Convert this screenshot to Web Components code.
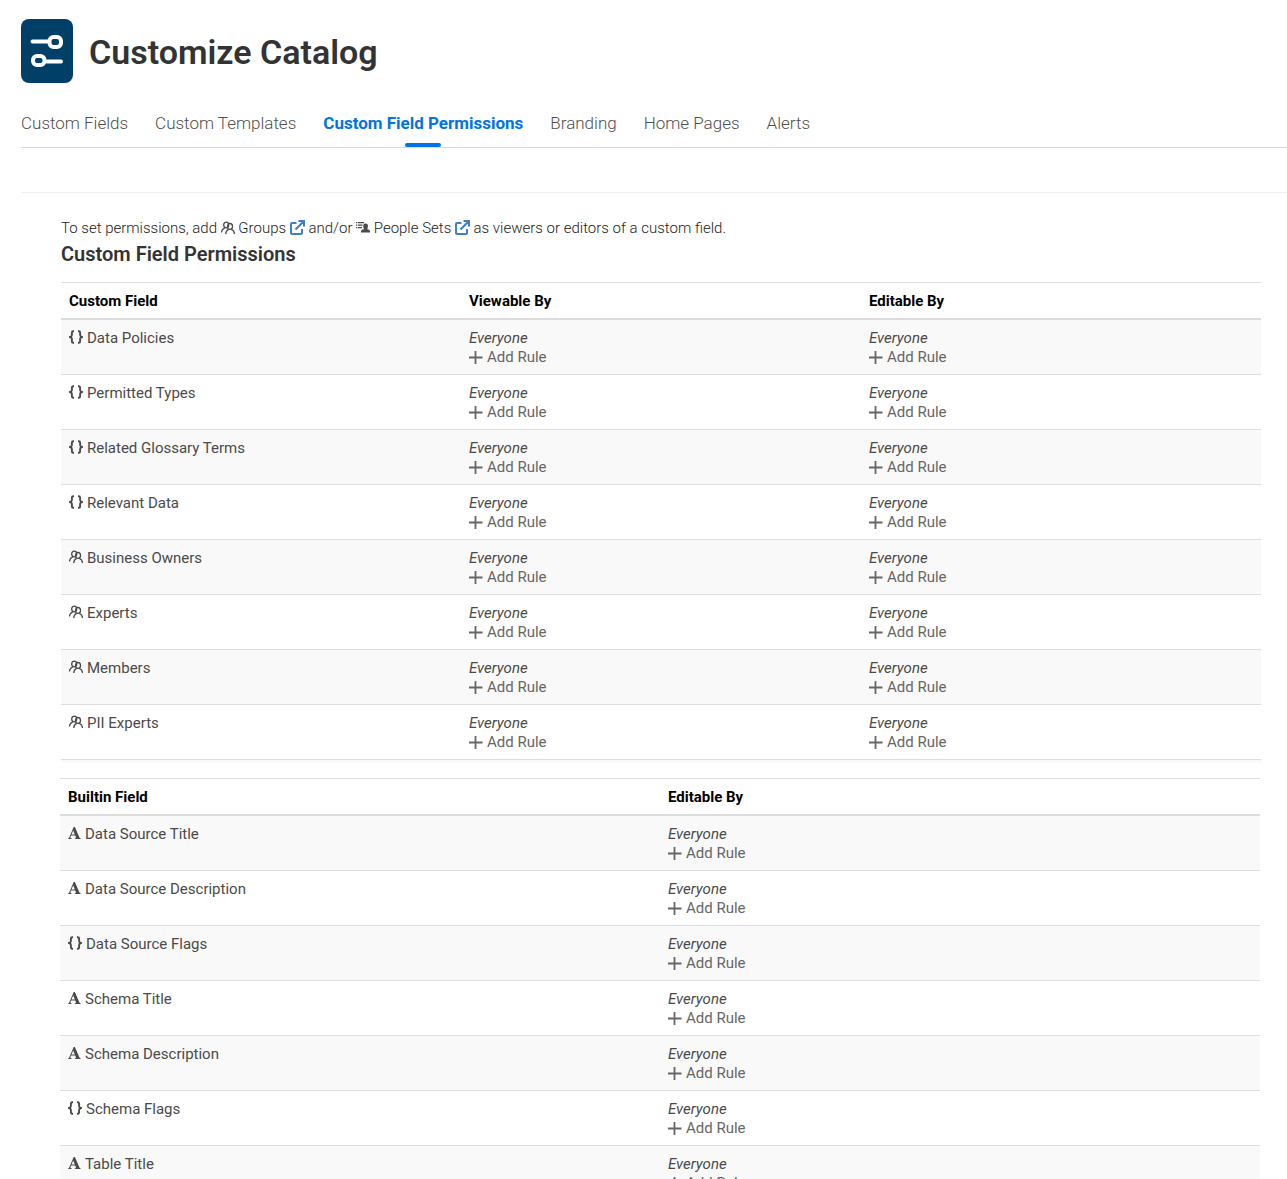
<!DOCTYPE html>
<html lang="en">
<head>
<meta charset="utf-8">
<title>Customize Catalog</title>
<style>
body{margin:0;background:#fff;color:#4a4a4a;font:400 15px/19px Roboto,"Liberation Sans",sans-serif}
</style>
</head>
<body>
<catalog-page>
  <page-header slot="header">Customize Catalog</page-header>
  <tab-bar slot="tabs">
    <tab-link>Custom Fields</tab-link>
    <tab-link>Custom Templates</tab-link>
    <tab-link current>Custom Field Permissions</tab-link>
    <tab-link>Branding</tab-link>
    <tab-link>Home Pages</tab-link>
    <tab-link>Alerts</tab-link>
  </tab-bar>
  <permission-intro></permission-intro>
  <permission-table id="custom"></permission-table>
  <permission-table id="builtin"></permission-table>
</catalog-page>
<script>
const ICONS = {
  sliders: '<svg width="52" height="64" viewBox="0 0 52 64"><rect width="52" height="64" rx="8" fill="#003f68"/><g fill="none" stroke="#fff" stroke-linecap="round" stroke-width="4"><path d="M11.500 22.500H27M26 42.500H40"/><rect x="28.500" y="18" width="11.500" height="10" rx="4"/><rect x="12" y="37" width="11.500" height="9" rx="4"/></g></svg>',
  braces: '<svg width="14" height="14" viewBox="0 0 14 14"><path d="M5 1.200H4.300Q2.900 1.200 2.900 2.600V5Q2.900 6.500 1 7Q2.900 7.500 2.900 9V11.400Q2.900 12.800 4.300 12.800H5M9 1.200H9.700Q11.100 1.200 11.100 2.600V5Q11.100 6.500 13 7Q11.100 7.500 11.100 9V11.400Q11.100 12.800 9.700 12.800H9" fill="none" stroke="currentColor" stroke-width="1.900"/></svg>',
  people: '<svg width="14" height="14" viewBox="0 0 14 14"><g fill="none" stroke="currentColor" stroke-width="1.300"><ellipse cx="5.200" cy="4" rx="2.500" ry="2.800"/><ellipse cx="9" cy="5.400" rx="2.500" ry="2.900"/><path d="M.4 11.500C.6 9 1.600 7.600 3.800 6.900M4.700 13C4.900 10.500 5.900 9 7.600 8.300M10.300 8.300C12.400 9 13.400 10.500 13.600 13"/></g></svg>',
  sets: '<svg width="14" height="14" viewBox="0 0 14 14" fill="currentColor"><path d="M0 1h1.300v1.200H0zM2 1H8v1.200H2zM0 3.500h1.300v1.200H0zM2 3.500h4.500v1.200H2zM0 6h1.300v1.200H0zM2 6h4v1.200H2zM5 11.500V9.900Q5.200 8.600 8 8.200L7.400 6.500Q6.600 2.600 9.600 2.500Q12.600 2.600 11.800 6.500L11.200 8.200Q13.800 8.600 14 9.900V11.500z"/></svg>',
  open: '<svg width="15" height="15" viewBox="0 0 15 15"><path d="M6.500 3H2Q1 3 1 4V13Q1 14 2 14H11Q12 14 12 13V9M8.500 1H14V6.500M14 1L5.500 9.500" fill="none" stroke="#3d80c8" stroke-width="2"/></svg>',
  plus: '<svg width="14" height="14" viewBox="0 0 14 14"><path d="M6.500 0V13M0 6.500H13.500" fill="none" stroke="currentColor" stroke-width="1.800"/></svg>',
  text: '<svg width="13" height="14" viewBox="0 0 13 14" fill="currentColor"><path fill-rule="evenodd" d="M0 13V12.400Q.8 12.300 1.200 11.400L5.700 1H6.900L11.300 11.200Q11.800 12.300 12.700 12.400V13H6.800V12.400Q8.200 12.300 7.900 11.200L7.200 9.500H3.100L2.500 10.900Q2 12.300 3.700 12.400V13zM3.500 8.600H6.800L5.200 4.600z"/></svg>'
};

class BaseElement extends HTMLElement {
  constructor() {
    super();
    this.attachShadow({mode: 'open'});
  }
  connectedCallback() { this.shadowRoot.innerHTML = this.render(); }
}

customElements.define('ui-icon', class extends BaseElement {
  render() {
    return `<style>:host{display:inline-flex;vertical-align:-2px}svg{display:block}</style>${ICONS[this.getAttribute('name')]}`;
  }
});

customElements.define('catalog-page', class extends BaseElement {
  render() {
    return `<style>
      :host{display:flex;flex-direction:column;height:100vh;box-sizing:border-box;padding-left:21px;overflow-x:hidden;overflow-y:auto;scrollbar-width:none}
      main{margin-top:44px;border-top:1px solid #eee;padding:26px 26px 40px 40px}
    </style>
    <slot name="header"></slot><slot name="tabs"></slot><main><slot></slot></main>`;
  }
});

customElements.define('page-header', class extends BaseElement {
  render() {
    return `<style>
      :host{display:flex;align-items:center;gap:16px;padding:19px 0 20px}
      h1{margin:0;padding-top:2px;font-size:34px;line-height:40px;font-weight:600;color:#333}
    </style><ui-icon name="sliders"></ui-icon><h1><slot></slot></h1>`;
  }
});

customElements.define('tab-bar', class extends BaseElement {
  render() {
    return `<style>
      :host{display:block;flex:none}
      nav{display:flex;gap:27px;border-bottom:1px solid #d5dcdd}
    </style><nav><slot></slot></nav>`;
  }
});

customElements.define('tab-link', class extends BaseElement {
  render() {
    return `<style>
      :host{display:block}
      a{display:flex;flex-direction:column;align-items:center;padding-top:8px;font-size:17px;line-height:24px;color:#4f4f4f;font-weight:300;text-decoration:none}
      a::after{content:"";width:36px;height:4px;margin-top:8px;border-radius:2px}
      :host([current]) a{color:#0073e6;font-weight:700}
      :host([current]) a::after{background:#0073e6}
    </style><a href="#"><slot></slot></a>`;
  }
});

customElements.define('permission-intro', class extends BaseElement {
  render() {
    return `<style>
      :host{display:block}
      p{margin:0;font-weight:300;color:#222}
      ui-icon{color:#4a4a4a}
      h2{margin:4px 0 16px;font-size:20px;line-height:24px;font-weight:600;color:#333}
    </style>
    <p>To set permissions, add <ui-icon name="people"></ui-icon> Groups <a href="#"><ui-icon name="open"></ui-icon></a> and/or <ui-icon name="sets"></ui-icon> People Sets <a href="#"><ui-icon name="open"></ui-icon></a> as viewers or editors of a custom field.</p>
    <h2>Custom Field Permissions</h2>`;
  }
});

customElements.define('rule-cell', class extends BaseElement {
  render() {
    return `<style>
      :host{display:flex;flex-direction:column;align-items:flex-start}
      button{display:flex;align-items:center;gap:4px;margin:0;padding:0;border:0;background:none;font:inherit;color:#666;cursor:pointer}
    </style><em>Everyone</em><button type="button"><ui-icon name="plus"></ui-icon>Add Rule</button>`;
  }
});

customElements.define('permission-table', class extends HTMLElement {
  constructor() { super(); this.attachShadow({mode: 'open'}); }
  set data({columns, rows, spacer}) {
    const cells = columns.slice(1).map(() => '<td><rule-cell></rule-cell></td>').join('');
    this.shadowRoot.innerHTML = `<style>
      :host{display:block}
      :host(#builtin){margin:15px 1px 0 -1px}
      table{width:100%;table-layout:fixed;border-collapse:separate;border-spacing:0}
      th{padding:9px 8px 7px;border-top:1px solid #ddd;border-bottom:2px solid #ddd;text-align:left;font-weight:700;color:#000}
      td{padding:9px 8px 7px;border-bottom:1px solid #ddd;vertical-align:top}
      tbody tr:nth-child(odd){background:#f9f9f9}
      .field{display:flex;align-items:flex-start;gap:4px}
      .field ui-icon{padding-top:1px}
      .spacer td{padding:0;height:3px;border:0}
    </style>
    <table><thead><tr>${columns.map(c => `<th scope="col">${c}</th>`).join('')}</tr></thead>
    <tbody>${rows.map(([icon, name]) => `<tr><td><div class="field"><ui-icon name="${icon}"></ui-icon>${name}</div></td>${cells}</tr>`).join('')}
    ${spacer ? `<tr class="spacer"><td colspan="${columns.length}"></td></tr>` : ''}</tbody></table>`;
  }
});

document.getElementById('custom').data = {
  columns: ['Custom Field', 'Viewable By', 'Editable By'],
  spacer: true,
  rows: [['braces', 'Data Policies'], ['braces', 'Permitted Types'], ['braces', 'Related Glossary Terms'], ['braces', 'Relevant Data'],
    ['people', 'Business Owners'], ['people', 'Experts'], ['people', 'Members'], ['people', 'PII Experts']]
};
document.getElementById('builtin').data = {
  columns: ['Builtin Field', 'Editable By'],
  rows: [['text', 'Data Source Title'], ['text', 'Data Source Description'], ['braces', 'Data Source Flags'],
    ['text', 'Schema Title'], ['text', 'Schema Description'], ['braces', 'Schema Flags'], ['text', 'Table Title']]
};
</script>
</body>
</html>
